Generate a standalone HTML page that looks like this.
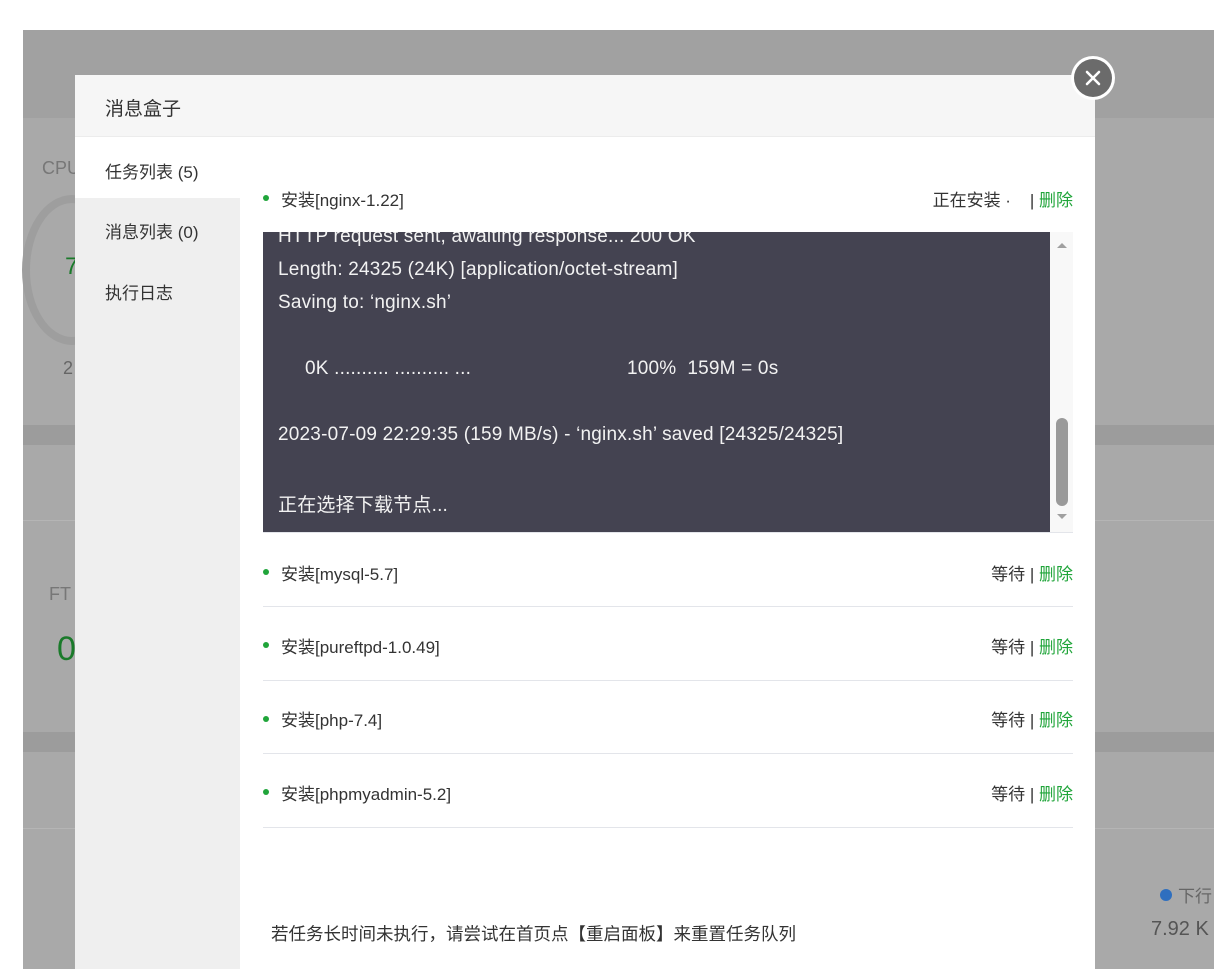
<!DOCTYPE html>
<html><head><meta charset="utf-8"><style>
*{margin:0;padding:0;box-sizing:border-box}
body{width:1223px;height:969px;position:relative;overflow:hidden;background:#fff;font-family:"Liberation Sans","Noto Sans CJK SC",sans-serif;color:#333}
.a{position:absolute}
.bg{left:23px;top:30px;width:1191px;height:939px;background:#a9a9a9}
.t{font-size:17px;white-space:nowrap}
.r{right:150px;font-size:17px;white-space:nowrap}
.term{left:263px;top:232px;width:787px;height:300px;background:#444351;color:#f2f2f2;font-family:"Liberation Sans","Noto Sans CJK SC",sans-serif;font-size:19px;letter-spacing:0.2px;overflow:hidden}
.term div{position:absolute;left:15px;white-space:pre}
.row{left:263px;width:810px;height:1px;background:#e3e5ea}
.dot{width:6px;height:6px;border-radius:50%;background:#20a53a}
.g{color:#20a53a}
</style></head><body>
<div class="a bg"></div>
<div class="a" style="left:23px;top:30px;width:1191px;height:88px;background:#a1a1a1"></div>
<div class="a" style="left:23px;top:425px;width:1191px;height:20px;background:#9c9c9c"></div>
<div class="a" style="left:23px;top:520px;width:1191px;height:1px;background:#b5b5b5"></div>
<div class="a" style="left:23px;top:732px;width:1191px;height:20px;background:#9c9c9c"></div>
<div class="a" style="left:23px;top:828px;width:1191px;height:1px;background:#b5b5b5"></div>
<div class="a" style="left:22px;top:195px;width:100px;height:150px;border:8px solid #9e9e9e;border-radius:50%"></div>
<div class="a t" style="left:42px;top:158px;color:#777;font-size:18px">CPU</div>
<div class="a t" style="left:65px;top:253px;color:#1a7a2a;font-size:24px">7</div>
<div class="a t" style="left:63px;top:358px;color:#666;font-size:18px">2</div>
<div class="a t" style="left:49px;top:584px;color:#777;font-size:18px">FT</div>
<div class="a t" style="left:57px;top:630px;color:#1a7a2a;font-size:34px">0</div>
<div class="a" style="left:1160px;top:889px;width:12px;height:12px;border-radius:50%;background:#2f6fbf"></div>
<div class="a t" style="left:1178px;top:882px;color:#666">下行</div>
<div class="a t" style="left:1151px;top:918px;color:#555;font-size:20px">7.92 K</div>

<div class="a" style="left:75px;top:75px;width:1020px;height:894px;background:#fff"></div>
<div class="a" style="left:75px;top:75px;width:1020px;height:62px;background:#f6f6f6;border-bottom:1px solid #ececec"></div>
<div class="a t" style="left:105px;top:94px;font-size:19px">消息盒子</div>
<div class="a" style="left:75px;top:198px;width:165px;height:771px;background:#efefef"></div>
<div class="a t" style="left:105px;top:158px">任务列表 (5)</div>
<div class="a t" style="left:105px;top:218px">消息列表 (0)</div>
<div class="a t" style="left:105px;top:279px">执行日志</div>

<div class="a" style="left:1071px;top:56px;width:44px;height:44px;border-radius:50%;background:#fff"></div>
<div class="a" style="left:1074px;top:59px;width:38px;height:38px;border-radius:50%;background:#6b6b6b"></div>
<svg class="a" style="left:1074px;top:59px" width="38" height="38"><path d="M13 13L25 25M25 13L13 25" stroke="#fff" stroke-width="2.6" stroke-linecap="round"/></svg>

<div class="a dot" style="left:263px;top:195px"></div>
<div class="a t" style="left:281px;top:186px">安装[nginx-1.22]</div>
<div class="a r" style="top:186px">正在安装 ·&nbsp;&nbsp;&nbsp;&nbsp;| <span class="g">删除</span></div>

<div class="a term">
<div style="top:-6px">HTTP request sent, awaiting response... 200 OK</div>
<div style="top:27px">Length: 24325 (24K) [application/octet-stream]</div>
<div style="top:60px">Saving to: ‘nginx.sh’</div>
<div style="top:126px;left:42px">0K .......... .......... ...</div>
<div style="top:126px;left:364px">100%  159M = 0s</div>
<div style="top:192px">2023-07-09 22:29:35 (159 MB/s) - ‘nginx.sh’ saved [24325/24325]</div>
<div style="top:258px">正在选择下载节点...</div>
</div>
<div class="a" style="left:1050px;top:232px;width:23px;height:300px;background:#f8f8f8"></div>
<div class="a" style="left:1056px;top:418px;width:12px;height:88px;border-radius:6px;background:#9a9a9a"></div>
<svg class="a" style="left:1055px;top:240px" width="14" height="10"><path d="M2 8L7 3L12 8Z" fill="#a0a0a0"/></svg>
<svg class="a" style="left:1055px;top:512px" width="14" height="10"><path d="M2 2L7 7L12 2Z" fill="#a0a0a0"/></svg>
<div class="a row" style="top:532px"></div>

<div class="a dot" style="left:263px;top:569px"></div>
<div class="a t" style="left:281px;top:560px">安装[mysql-5.7]</div>
<div class="a r" style="top:560px">等待 | <span class="g">删除</span></div>
<div class="a row" style="top:606px"></div>
<div class="a dot" style="left:263px;top:642px"></div>
<div class="a t" style="left:281px;top:633px">安装[pureftpd-1.0.49]</div>
<div class="a r" style="top:633px">等待 | <span class="g">删除</span></div>
<div class="a row" style="top:680px"></div>
<div class="a dot" style="left:263px;top:716px"></div>
<div class="a t" style="left:281px;top:706px">安装[php-7.4]</div>
<div class="a r" style="top:706px">等待 | <span class="g">删除</span></div>
<div class="a row" style="top:753px"></div>
<div class="a dot" style="left:263px;top:789px"></div>
<div class="a t" style="left:281px;top:780px">安装[phpmyadmin-5.2]</div>
<div class="a r" style="top:780px">等待 | <span class="g">删除</span></div>
<div class="a row" style="top:827px"></div>

<div class="a t" style="left:271px;top:921px;font-size:17.5px">若任务长时间未执行，请尝试在首页点【重启面板】来重置任务队列</div>
</body></html>
